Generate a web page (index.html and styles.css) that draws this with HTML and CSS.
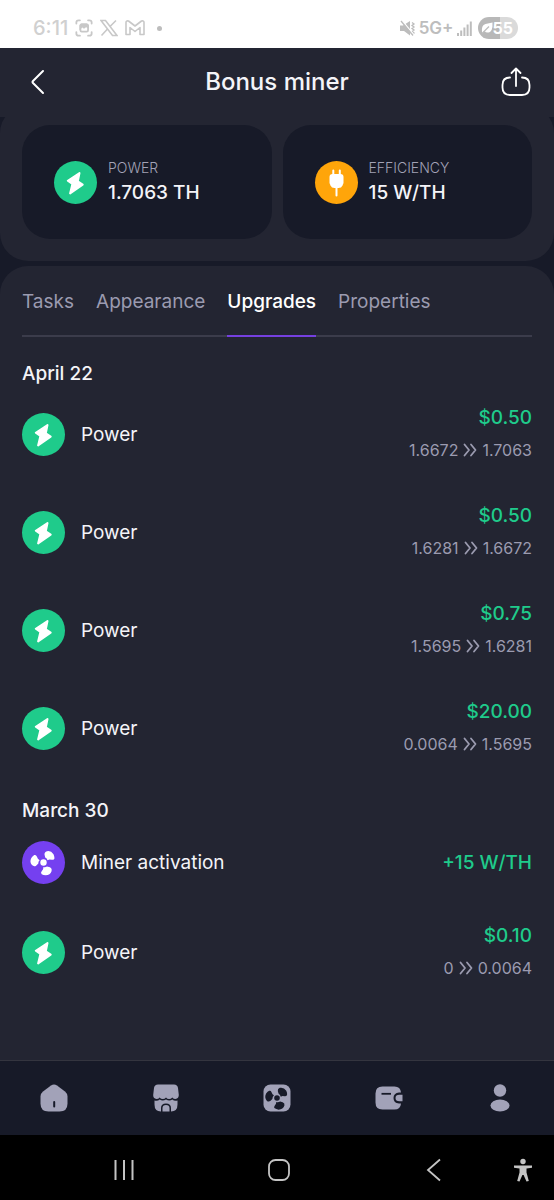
FILE: index.html
```html
<!DOCTYPE html>
<html lang="en">
<head>
  <meta charset="UTF-8">
  <meta name="viewport" content="width=device-width, initial-scale=1">
  <title>Bonus miner</title>
  <link rel="stylesheet" href="styles.css">
</head>
<body>

  <!-- shared icons -->
  <svg class="sprite" aria-hidden="true">
    <symbol id="bolt" viewBox="0 0 43 43">
      <path d="M25.500 12 13.800 19.800l4.600 3.200-2.300 9.400 12.600-8.800-4.900-3.200z" fill="#fff" stroke="#fff" stroke-width="2" stroke-linejoin="round"/>
    </symbol>
    <symbol id="plug" viewBox="0 0 43 43">
      <path d="M18.300 9.500v5M24.800 9.500v5M21.500 26v8.500" stroke="#fff" stroke-width="2" stroke-linecap="round"/>
      <path d="M17.500 13h8q3 0 3 3v6l-1 2.500q-1 2.500-4 2.500h-4q-3 0-4-2.500l-1-2.500v-6q0-3 3-3z" fill="#fff"/>
    </symbol>
    <symbol id="fan" viewBox="0 0 43 43">
      <g fill="#fff">
        <circle cx="21.500" cy="21.500" r="3.200"/>
        <path id="blade" d="M23.200 16.500 22.500 13.500q-.2-2.500 2.500-3.300 4-.8 6.500 3 1 2.200 1 4-.3 1.800-2.500 1.500l-2.500-.2-2 .8q-.5-2-2.300-2.800z"/>
        <use href="#blade" transform="rotate(120 21.500 21.500)"/>
        <use href="#blade" transform="rotate(240 21.500 21.500)"/>
      </g>
    </symbol>
    <symbol id="arrows" viewBox="0 0 14 14">
      <path d="M1.500 1.500 6 7l-4.500 5.500M8 1.500 12.500 7 8 12.500" fill="none" stroke="currentColor" stroke-width="1.800" stroke-linecap="round" stroke-linejoin="round"/>
    </symbol>
  </svg>

  <div class="status-bar">
    <span class="clock">6:11</span>
    <svg width="18" height="18" viewBox="0 0 20 20" fill="none" stroke="currentColor" stroke-width="2" stroke-linecap="round">
      <path d="M1.500 5V4q0-2.500 2.500-2.500h1.500M14.500 1.500H16q2.500 0 2.500 2.500v1M18.500 14.500V16q0 2.500-2.500 2.500h-1.500M5.500 18.500H4q-2.500 0-2.500-2.500v-1.500"/>
      <rect x="6" y="6" width="8.500" height="8" rx="1.500"/>
      <path d="M6 10l2-2 2 1.500L12 8l2.500 1V7.500L13 6H7L6 7z" fill="currentColor"/>
    </svg>
    <svg width="18" height="18" viewBox="0 0 18 18" fill="none" stroke="currentColor" stroke-width="1.600">
      <path d="M1 1.500h4.500l11.500 15h-4.500zM16 1.500l-6.500 6.500M7.500 10 1.500 16.500"/>
    </svg>
    <svg width="20" height="16" viewBox="0 0 20 16" fill="none" stroke="currentColor" stroke-width="1.600" stroke-linejoin="round">
      <path d="M1 14.500V2.500q0-2 2.500-1.500L10 6l6.500-5Q19 .500 19 2.500v12h-4V7.500l-5 4-5-4v7z"/>
    </svg>
    <span class="dot"></span>

    <span class="status-right">
      <svg width="16" height="17" viewBox="0 0 16 17">
        <path d="M0 5.500h3L10 1v14.500L4 11H0z" fill="currentColor"/>
        <path d="M12 2.500l2 1.500-2 1.500 2 1.500-2 1.500 2 1.500-2 1.500 2 1.500-2 1.500" fill="none" stroke="currentColor" stroke-width="1.300"/>
        <path d="M2 .500 14 15" stroke="#fff" stroke-width="1.300"/>
        <path d="M1 1 13 15.500" stroke="currentColor" stroke-width="1.300"/>
      </svg>
      <span class="network">5G+</span>
      <svg width="15" height="15" viewBox="0 0 15 15" fill="currentColor">
        <path d="M0 12h2v3H0zM3.200 9.500h2V15h-2zM6.400 6.500h2V15h-2zM9.600 3.500h2V15h-2zM12.800.5h2V15h-2z"/>
      </svg>
      <span class="battery">
        <svg width="12" height="12" viewBox="0 0 12 12">
          <path d="M1 11q-1-8 3.500-9L11.500.5q.5 9-4 10-2.500.5-4-1.500z" fill="#fff"/>
          <path d="M1 11.500 8 4.500" stroke="#bdbdbd" stroke-width="1.200"/>
        </svg>55
      </span>
    </span>
  </div>

  <header class="header">
    <button class="icon-btn" type="button" aria-label="Back">
      <svg width="32" height="32" viewBox="0 0 32 32" fill="none" stroke="#fff" stroke-width="2" stroke-linecap="round" stroke-linejoin="round">
        <path d="M21 5 11 15q-1 1 0 2l10 10"/>
      </svg>
    </button>
    <h1>Bonus miner</h1>
    <button class="icon-btn" type="button" aria-label="Share">
      <svg width="32" height="32" viewBox="0 0 32 32" fill="none" stroke="#fff" stroke-width="1.800" stroke-linecap="round" stroke-linejoin="round">
        <path d="M16 20V3M11.500 7 16 2.500 20.500 7M10 11.500q-7.500 0-7.500 7.500v2.500Q2.500 29 10 29h12q7.500 0 7.500-7.500V19q0-7.500-7.500-7.500"/>
      </svg>
    </button>
  </header>

  <section class="stats">
    <div class="stat">
      <svg class="badge green"><use href="#bolt"/></svg>
      <div>
        <div class="stat-label">POWER</div>
        <div class="stat-value">1.7063 TH</div>
      </div>
    </div>
    <div class="stat">
      <svg class="badge orange"><use href="#plug"/></svg>
      <div>
        <div class="stat-label">EFFICIENCY</div>
        <div class="stat-value">15 W/TH</div>
      </div>
    </div>
  </section>

  <main class="panel">
    <nav class="tabs">
      <a href="#tasks">Tasks</a>
      <a href="#appearance">Appearance</a>
      <a href="#upgrades" class="active">Upgrades</a>
      <a href="#properties">Properties</a>
    </nav>

    <section class="group">
      <h2>April 22</h2>
      <ul class="history">
        <li>
          <svg class="badge green"><use href="#bolt"/></svg>
          <span class="name">Power</span>
          <div class="amount">
            <div class="price">$0.50</div>
            <div class="change">1.6672 <svg class="arrows"><use href="#arrows"/></svg> 1.7063</div>
          </div>
        </li>
        <li>
          <svg class="badge green"><use href="#bolt"/></svg>
          <span class="name">Power</span>
          <div class="amount">
            <div class="price">$0.50</div>
            <div class="change">1.6281 <svg class="arrows"><use href="#arrows"/></svg> 1.6672</div>
          </div>
        </li>
        <li>
          <svg class="badge green"><use href="#bolt"/></svg>
          <span class="name">Power</span>
          <div class="amount">
            <div class="price">$0.75</div>
            <div class="change">1.5695 <svg class="arrows"><use href="#arrows"/></svg> 1.6281</div>
          </div>
        </li>
        <li>
          <svg class="badge green"><use href="#bolt"/></svg>
          <span class="name">Power</span>
          <div class="amount">
            <div class="price">$20.00</div>
            <div class="change">0.0064 <svg class="arrows"><use href="#arrows"/></svg> 1.5695</div>
          </div>
        </li>
      </ul>
    </section>

    <section class="group">
      <h2>March 30</h2>
      <ul class="history">
        <li>
          <svg class="badge purple"><use href="#fan"/></svg>
          <span class="name">Miner activation</span>
          <div class="amount">
            <div class="price">+15 W/TH</div>
          </div>
        </li>
        <li>
          <svg class="badge green"><use href="#bolt"/></svg>
          <span class="name">Power</span>
          <div class="amount">
            <div class="price">$0.10</div>
            <div class="change">0 <svg class="arrows"><use href="#arrows"/></svg> 0.0064</div>
          </div>
        </li>
      </ul>
    </section>
  </main>

  <nav class="bottom-nav">
    <a href="#home" aria-label="Home">
      <svg width="28" height="28" viewBox="0 0 28 28">
        <path d="M11 1.500q3-2 6 0l8 6q2.500 2 2.500 5v7q0 8-8 8h-11q-8 0-8-8v-7q0-3 2.500-5z" fill="currentColor"/>
        <path d="M14.200 18v4.500" stroke="#171a28" stroke-width="2" stroke-linecap="round"/>
      </svg>
    </a>
    <a href="#store" aria-label="Store">
      <svg width="28" height="28" viewBox="0 0 28 28">
        <path d="M6 .500h16q3.500 0 4 3.500l.8 7q0 3.500-3.300 4-2 0-3.200-1.500-1.300 1.500-3.200 1.500T14 13.500Q12.700 15 10.800 15t-3.200-1.500Q6.500 15 4.500 15 1 14.500 1.200 11L2 4Q2.500.500 6 .500z" fill="currentColor"/>
        <path d="M2.500 16.500q3 1 5.200-1 2.800 2 6.300 0 3.500 2 6.300 0 2.200 2 5.200 1v4q0 7-6.500 7V24q0-4.500-5-4.500T9 24v3.500q-6.500 0-6.500-7z" fill="currentColor"/>
        <path d="M10.500 27.500V24q0-3 3.500-3t3.500 3v3.500z" fill="currentColor"/>
      </svg>
    </a>
    <a href="#miner" aria-label="Miner">
      <svg width="28" height="28" viewBox="0 0 28 28">
        <rect x=".5" y=".5" width="27" height="27" rx="7" fill="currentColor"/>
        <g fill="#171a28">
          <circle cx="14" cy="14" r="2.800"/>
          <path id="nav-blade" d="M15.500 9.500 14.800 7q-.3-2.500 2-3.200 4-.8 6.500 3 1 2.200.8 4-.3 1.700-2.300 1.400L19.500 12l-1.700.7q-.5-2-2.300-3.200z"/>
          <use href="#nav-blade" transform="rotate(120 14 14)"/>
          <use href="#nav-blade" transform="rotate(240 14 14)"/>
        </g>
      </svg>
    </a>
    <a href="#wallet" aria-label="Wallet">
      <svg width="28" height="28" viewBox="0 0 28 28">
        <path d="M7.500 2.500h12q6 0 6.500 6h-2q-5.500.5-5.500 5.500t5.500 5.500h2q-.5 6-6.500 6h-12q-7 0-7-7v-9q0-7 7-7z" fill="currentColor"/>
        <path d="M27.500 10.700h-3q-4 0-4 3.300t4 3.300h3z" fill="currentColor"/>
        <path d="M6.500 9.800h9.500" stroke="#171a28" stroke-width="1.800"/>
      </svg>
    </a>
    <a href="#profile" aria-label="Profile">
      <svg width="28" height="28" viewBox="0 0 28 28" fill="currentColor">
        <circle cx="14" cy="6.500" r="6.200"/>
        <ellipse cx="14" cy="21.500" rx="9.500" ry="6"/>
      </svg>
    </a>
  </nav>

  <div class="system-nav">
    <button type="button" aria-label="Recent apps">
      <svg width="24" height="24" viewBox="0 0 24 24" stroke="currentColor" stroke-width="2">
        <path d="M3.500 2v20M12 2v20M20.500 2v20"/>
      </svg>
    </button>
    <button type="button" aria-label="Home screen">
      <svg width="24" height="24" viewBox="0 0 24 24" fill="none" stroke="currentColor" stroke-width="1.800">
        <rect x="2" y="2" width="20" height="20" rx="6.500"/>
      </svg>
    </button>
    <button type="button" aria-label="Go back">
      <svg width="24" height="24" viewBox="0 0 24 24" fill="none" stroke="currentColor" stroke-width="1.800">
        <path d="M18 1.500 6 12l12 10.500"/>
      </svg>
    </button>
    <button type="button" aria-label="Accessibility">
      <svg width="20" height="24" viewBox="0 0 20 24" fill="currentColor">
        <circle cx="10" cy="3.500" r="2.700"/>
        <path d="M1 7.500h18v2.300l-5.500.7v4l2.300 8.500-2.300.6L10.600 17H9.400l-2.900 6.600L4.200 23l2.300-8.500v-4L1 9.800z"/>
      </svg>
    </button>
  </div>

</body>
</html>
```
FILE: styles.css
```css
* {
  box-sizing: border-box;
}

body {
  margin: 0;
  min-height: 100vh;
  display: flex;
  flex-direction: column;
  font-family: Inter, sans-serif;
  font-size: 19px;
  color: #f4f4f8;
  background-color: #171a28;
}

h1, h2, ul {
  margin: 0;
  padding: 0;
}

a {
  color: inherit;
  text-decoration: none;
}

button {
  display: flex;
  align-items: center;
  justify-content: center;
  padding: 0;
  border: 0;
  background: none;
  color: inherit;
}

svg {
  display: block;
  flex-shrink: 0;
}

.sprite {
  position: absolute;
  width: 0;
  height: 0;
}

/* Phone status bar */
.status-bar {
  display: flex;
  align-items: center;
  gap: 7px;
  height: 48px;
  padding: 8px 36px 0 33px;
  background-color: #fff;
  color: #c8c8c8;
}

.clock {
  font-size: 20px;
  font-weight: 500;
  color: #d0d0d0;
}

.dot {
  width: 5px;
  height: 5px;
  margin-left: 5px;
  border-radius: 50%;
  background-color: #bdbdbd;
}

.status-right {
  display: flex;
  align-items: center;
  gap: 3px;
  margin-left: auto;
  color: #bdbdbd;
}

.network {
  font-size: 17px;
  font-weight: 600;
}

.battery {
  display: flex;
  align-items: center;
  height: 22px;
  margin-left: 3px;
  padding: 0 5px 0 3px;
  border-radius: 11px;
  background: linear-gradient(90deg, #b8b8b8 55%, #dadada 55%);
  color: #fff;
  font-size: 16px;
  font-weight: 700;
}

/* Header */
.header {
  position: relative;
  z-index: 1;
  display: flex;
  align-items: center;
  justify-content: space-between;
  height: 69px;
  padding: 0 22px 2px;
  background-color: #232532;
}

.header h1 {
  font-size: 24px;
  font-weight: 500;
}

/* Stats */
.stats {
  display: grid;
  grid-template-columns: 1fr 1fr;
  gap: 11px;
  margin-top: -12px;
  padding: 20px 22px 22px;
  border-radius: 28px;
  background-color: #232532;
}

.stat {
  display: flex;
  align-items: center;
  gap: 11px;
  height: 114px;
  padding: 0 32px;
  border-radius: 28px;
  background-color: #171a28;
}

.stat-label {
  font-size: 14px;
  font-weight: 300;
  line-height: 22px;
  color: #a2a2b6;
}

.stat-value {
  font-weight: 500;
  line-height: 28px;
}

.badge {
  width: 43px;
  height: 43px;
  border-radius: 50%;
}

.green {
  background-color: #1fcb8b;
}

.orange {
  background-color: #ffa50a;
}

.purple {
  background-color: #7540f0;
}

/* Tabs and history */
.panel {
  flex: 1;
  margin-top: 5px;
  padding: 0 22px;
  border-radius: 28px 28px 0 0;
  background-color: #232532;
}

.tabs {
  display: flex;
  gap: 22px;
  margin-bottom: 24px;
  box-shadow: inset 0 -2px #3b3c4b;
  color: #9b9bb0;
}

.tabs a {
  padding: 23px 0 20px;
  line-height: 26px;
  border-bottom: 2px solid transparent;
}

.tabs .active {
  color: #fff;
  border-color: #7540e0;
  font-weight: 500;
}

.group {
  margin-bottom: 40px;
}

.group h2 {
  margin-bottom: 17px;
  font-size: 19px;
  font-weight: 500;
  line-height: 26px;
}

.history {
  display: flex;
  flex-direction: column;
  gap: 38px;
  list-style: none;
}

.history li {
  display: flex;
  align-items: center;
  gap: 16px;
}

.amount {
  display: grid;
  gap: 4px;
  margin-left: auto;
  text-align: right;
  line-height: 28px;
}

.price {
  color: #1fcb8b;
  font-weight: 500;
}

.change {
  display: flex;
  align-items: center;
  justify-content: flex-end;
  gap: 5px;
  color: #9b9bb0;
  font-size: 16px;
}

.arrows {
  width: 14px;
  height: 14px;
}

/* App navigation */
.bottom-nav {
  display: flex;
  align-items: center;
  justify-content: space-between;
  height: 75px;
  padding: 0 40px;
  border-top: 1px solid #34353f;
  color: #a2a2b8;
}

/* Phone navigation */
.system-nav {
  display: grid;
  grid-template-columns: 1fr 1fr 1fr 22px;
  align-items: center;
  justify-items: center;
  height: 65px;
  padding: 4px 20px 0 46px;
  background-color: #000;
  color: #c4c4c4;
}
```
